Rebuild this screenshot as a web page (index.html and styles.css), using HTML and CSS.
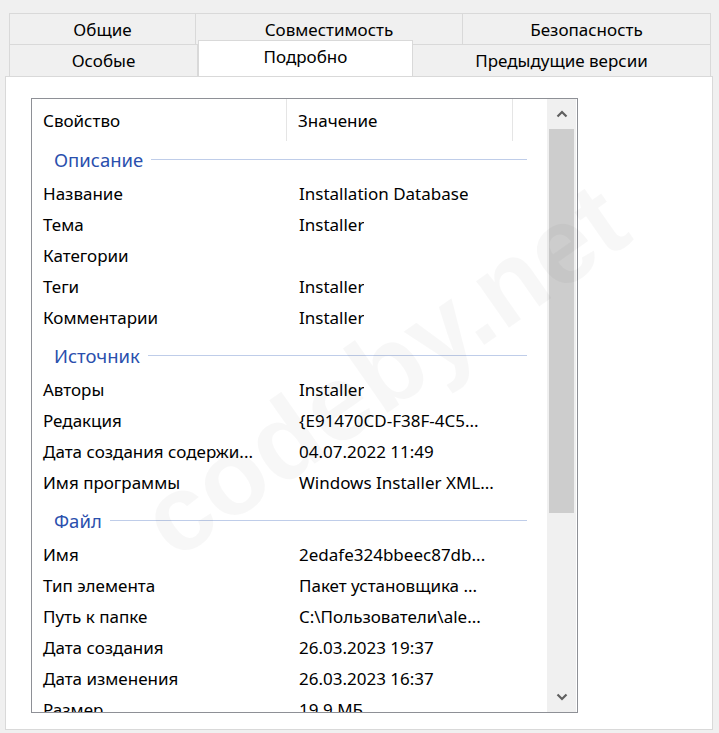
FILE: index.html
```html
<!DOCTYPE html>
<html lang="ru">
<head>
<meta charset="utf-8">
<link rel="stylesheet" href="styles.css">
</head>
<body>
<div class="window">
  <div class="tabs">
    <div class="tab-row row1">
      <div class="tab w1">Общие</div>
      <div class="tab w2">Совместимость</div>
      <div class="tab w3">Безопасность</div>
    </div>
    <div class="tab-row row2">
      <div class="tab w4">Особые</div>
      <div class="tab w5 selected">Подробно</div>
      <div class="tab w6">Предыдущие версии</div>
    </div>
  </div>
  <div class="panel">
    <div class="list">
      <div class="list-body">
        <div class="header">
          <div class="hcell c1">Свойство</div>
          <div class="hcell c2">Значение</div>
          <div class="hcell c3"></div>
        </div>
        <div class="group"><span class="gname">Описание</span><span class="gline"></span></div>
        <div class="item"><span class="k">Название</span><span class="v">Installation Database</span></div>
        <div class="item"><span class="k">Тема</span><span class="v">Installer</span></div>
        <div class="item"><span class="k">Категории</span><span class="v"></span></div>
        <div class="item"><span class="k">Теги</span><span class="v">Installer</span></div>
        <div class="item"><span class="k">Комментарии</span><span class="v">Installer</span></div>
        <div class="group"><span class="gname">Источник</span><span class="gline"></span></div>
        <div class="item"><span class="k">Авторы</span><span class="v">Installer</span></div>
        <div class="item"><span class="k">Редакция</span><span class="v">{E91470CD-F38F-4C5...</span></div>
        <div class="item"><span class="k">Дата создания содержи...</span><span class="v">04.07.2022 11:49</span></div>
        <div class="item"><span class="k">Имя программы</span><span class="v">Windows Installer XML...</span></div>
        <div class="group"><span class="gname">Файл</span><span class="gline"></span></div>
        <div class="item"><span class="k">Имя</span><span class="v">2edafe324bbeec87db...</span></div>
        <div class="item"><span class="k">Тип элемента</span><span class="v">Пакет установщика ...</span></div>
        <div class="item"><span class="k">Путь к папке</span><span class="v">C:\Пользователи\ale...</span></div>
        <div class="item"><span class="k">Дата создания</span><span class="v">26.03.2023 19:37</span></div>
        <div class="item"><span class="k">Дата изменения</span><span class="v">26.03.2023 16:37</span></div>
        <div class="item"><span class="k">Размер</span><span class="v">19,9 МБ</span></div>
      </div>
      <div class="scrollbar">
        <div class="arrow">
          <svg width="12" height="8" viewBox="0 0 12 8"><polyline points="1.5,6.5 6,2 10.5,6.5" fill="none" stroke="#606060" stroke-width="2.2"/></svg>
        </div>
        <div class="track"><div class="thumb"></div></div>
        <div class="arrow">
          <svg width="12" height="8" viewBox="0 0 12 8"><polyline points="1.5,1.5 6,6 10.5,1.5" fill="none" stroke="#606060" stroke-width="2.2"/></svg>
        </div>
      </div>
    </div>
    <div class="watermark">codeby.net</div>
  </div>
</div>
</body>
</html>
```
FILE: styles.css
```css
html, body {
  margin: 0;
  padding: 0;
}
body {
  background: #f0f0f0;
  font-family: "Noto Sans", "Open Sans", sans-serif;
  font-size: 17px;
  color: #000;
  width: 719px;
  height: 733px;
  overflow: hidden;
}
.window {
  padding-top: 13px;
}
.tabs {
  padding-left: 9px;
}
.tab-row {
  display: flex;
}
.tab {
  box-sizing: border-box;
  background: #f0f0f0;
  border: 1px solid #d9d9d9;
  display: flex;
  align-items: center;
  justify-content: center;
  white-space: nowrap;
}
.row1 .tab {
  height: 31px;
  border-bottom: none;
  padding-top: 1px;
}
.row2 .tab {
  height: 32px;
  border-bottom: none;
}
.row1 .tab + .tab,
.row2 .tab + .tab {
  border-left: none;
}
.w1 { width: 187px; }
.w2 { width: 267px; }
.w3 { width: 248px; }
.w4 { width: 189px; }
.w5 { width: 215px; }
.w6 { width: 298px; }
.row2 .tab.selected {
  background: #fff;
  height: 36px;
  margin-top: -4px;
  margin-bottom: -1px;
  border-left: 1px solid #d9d9d9;
  position: relative;
  z-index: 2;
  align-items: flex-start;
  padding-top: 4px;
}
.row2 .tab.selected + .tab {
  border-left: none;
}
.panel {
  margin-left: 5px;
  width: 708px;
  height: 654px;
  box-sizing: border-box;
  background: #fff;
  border: 1px solid #d9d9d9;
  padding: 21px 0 0 25px;
  position: relative;
  z-index: 1;
  overflow: hidden;
}
.list {
  width: 547px;
  height: 615px;
  box-sizing: border-box;
  border: 1px solid #8e9096;
  display: flex;
  overflow: hidden;
  background: #fff;
}
.list-body {
  width: 514px;
  overflow: hidden;
}
.header {
  display: flex;
  height: 38px;
  align-items: center;
}
.hcell {
  height: 38px;
  box-sizing: border-box;
  display: flex;
  align-items: center;
  padding-top: 8px;
}
.c1 {
  width: 255px;
  padding-left: 11px;
  border-right: 1px solid #e5e5e5;
  height: 42px;
  margin-top: 4px;
  padding-top: 0;
}
.c2 {
  width: 226px;
  padding-left: 11px;
  border-right: 1px solid #e5e5e5;
  height: 42px;
  margin-top: 4px;
  padding-top: 0;
}
.c3 {
  flex: 1;
}
.group {
  height: 41px;
  width: 495px;
  display: flex;
  align-items: center;
  padding-top: 4px;
  box-sizing: border-box;
  padding-left: 22px;
}
.gname {
  color: #2a4fad;
  font-size: 18.5px;
  margin-right: 8px;
  white-space: nowrap;
}
.gline {
  height: 1px;
  width: 0;
  flex: 1;
  background: #bfcde9;
}
.item {
  height: 31px;
  display: flex;
  align-items: center;
  white-space: nowrap;
}
.k {
  width: 256px;
  padding-left: 11px;
  box-sizing: border-box;
  overflow: hidden;
}
.v {
  padding-left: 11px;
  overflow: hidden;
}
.scrollbar {
  width: 29px;
  background: #f0f0f0;
  display: flex;
  flex-direction: column;
  margin-left: 1px;
}
.arrow {
  height: 30px;
  display: flex;
  align-items: center;
  justify-content: center;
}
.track {
  flex: 1;
  padding: 0 2px;
}
.thumb {
  height: 384px;
  background: #cdcdcd;
}
.watermark {
  position: absolute;
  left: 93px;
  top: 231px;
  width: 570px;
  height: 124px;
  line-height: 124px;
  text-align: center;
  font-family: "Liberation Sans", sans-serif;
  font-weight: bold;
  font-size: 108px;
  color: rgba(0, 0, 0, 0.03);
  transform: rotate(-35deg);
  transform-origin: center center;
  pointer-events: none;
  white-space: nowrap;
  z-index: 3;
}
```
